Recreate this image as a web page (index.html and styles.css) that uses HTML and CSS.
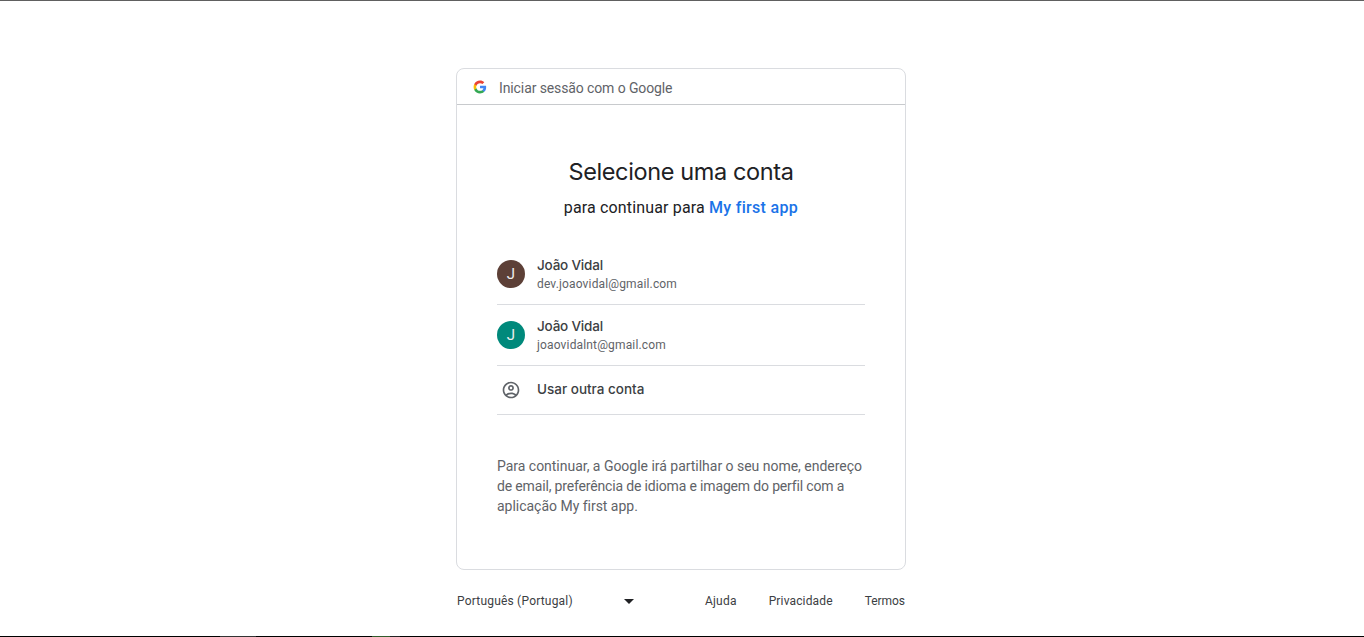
FILE: index.html
```html
<!DOCTYPE html>
<html lang="pt-PT">
<head>
<meta charset="utf-8">
<title>Iniciar sessão com o Google</title>
<link rel="stylesheet" href="styles.css">
</head>
<body>
<main class="page">
  <section class="card">
    <header class="card-header">
      <svg class="logo" viewBox="0 0 48 48" aria-hidden="true">
        <path fill="#4285F4" d="M45.12 24.5c0-1.56-.14-3.06-.4-4.5H24v8.51h11.84c-.51 2.75-2.06 5.08-4.39 6.64v5.52h7.11c4.16-3.83 6.56-9.47 6.56-16.17z"/>
        <path fill="#34A853" d="M24 46c5.94 0 10.92-1.97 14.56-5.33l-7.11-5.52c-1.97 1.32-4.49 2.1-7.45 2.1-5.73 0-10.58-3.87-12.31-9.07H4.34v5.7C7.96 41.07 15.4 46 24 46z"/>
        <path fill="#FBBC05" d="M11.69 28.18C11.25 26.86 11 25.45 11 24s.25-2.86.69-4.18v-5.7H4.34C2.85 17.09 2 20.45 2 24s.85 6.91 2.34 9.88l7.35-5.7z"/>
        <path fill="#EA4335" d="M24 10.75c3.23 0 6.13 1.11 8.41 3.29l6.31-6.31C34.91 4.18 29.93 2 24 2 15.4 2 7.96 6.93 4.34 14.12l7.35 5.7c1.73-5.2 6.58-9.07 12.31-9.07z"/>
      </svg>
      <span class="header-text">Iniciar sessão com o Google</span>
    </header>
    <div class="content">
      <h1 class="title">Selecione uma conta</h1>
      <p class="subtitle"><span class="lead">para continuar para</span> <a class="app">My first app</a></p>
      <ul class="accounts">
        <li class="account">
          <span class="avatar brown">J</span>
          <span class="who"><span class="name">João Vidal</span><span class="mail">dev.joaovidal@gmail.com</span></span>
        </li>
        <li class="account">
          <span class="avatar teal">J</span>
          <span class="who"><span class="name">João Vidal</span><span class="mail">joaovidalnt@gmail.com</span></span>
        </li>
        <li class="account other">
          <svg class="user-icon" viewBox="0 0 24 24" aria-hidden="true"><path fill="#5f6368" d="M12 2C6.48 2 2 6.48 2 12s4.48 10 10 10 10-4.48 10-10S17.52 2 12 2zM7.35 18.5C8.66 17.56 10.26 17 12 17s3.34.56 4.65 1.5C15.34 19.44 13.74 20 12 20s-3.34-.56-4.65-1.5zm10.79-1.38C16.45 15.8 14.32 15 12 15s-4.45.8-6.14 2.12C4.7 15.73 4 13.95 4 12c0-4.42 3.58-8 8-8s8 3.58 8 8c0 1.95-.7 3.73-1.86 5.12zM12 6c-1.93 0-3.5 1.57-3.5 3.5S10.07 13 12 13s3.5-1.57 3.5-3.5S13.93 6 12 6zm0 5c-.83 0-1.5-.67-1.5-1.5S11.17 8 12 8s1.5.67 1.5 1.5S12.83 11 12 11z"/></svg>
          <span class="other-name">Usar outra conta</span>
        </li>
      </ul>
      <p class="notice">Para continuar, a Google irá partilhar o seu nome, endereço<br><span class="tight">de email, preferência de idioma e imagem do perfil com a</span><br>aplicação My first app.</p>
    </div>
  </section>
  <footer class="footer">
    <div class="language"><span>Português (Portugal)</span><span class="arrow"></span></div>
    <nav class="links"><a class="help">Ajuda</a><a class="privacy">Privacidade</a><a class="terms">Termos</a></nav>
  </footer>
</main>
<div class="edge"></div>
</body>
</html>
```
FILE: styles.css
```css
* { box-sizing: border-box; }
body { margin: 0; background: #fff; font-family: Roboto, sans-serif; color: #202124; }
.page { height: 636px; border-top: 1px solid #606060; padding: 67px 0 0 456px; }
.card { width: 450px; height: 502px; border: 1px solid #dadce0; border-radius: 8px; }
.card-header { height: 36px; border-bottom: 1px solid #c8cacd; display: flex; align-items: center; padding: 2px 0 0 16px; }
.logo { width: 14px; height: 14px; margin-top: -2px; }
.header-text { margin-left: 12px; font-size: 14px; color: #5f6368; letter-spacing: -0.11px; }
.content { padding: 51px 40px 0; }
.title { margin: 0; text-align: center; font: 400 23.5px/32px Inter, sans-serif; letter-spacing: -0.38px; white-space: nowrap; }
.subtitle { margin: 8px 0 0; text-align: center; font-size: 16px; line-height: 24px; letter-spacing: 0.1px; white-space: nowrap; }
.lead { letter-spacing: 0.15px; }
.app { color: #1a73e8; font-weight: 500; letter-spacing: 0.32px; }
.accounts { list-style: none; margin: 24px 0 0; padding: 0; }
.account { height: 61px; display: flex; align-items: center; border-bottom: 1px solid #dadce0; }
.avatar { width: 28px; height: 28px; border-radius: 50%; color: #eee; font-size: 15px; line-height: 29px; text-align: center; }
.brown { background: #5d4037; }
.teal { background: #00897b; }
.who { margin-left: 12px; display: flex; flex-direction: column; }
.name { font: 500 13.5px/18px Inter, sans-serif; color: #3c4043; letter-spacing: -0.2px; }
.mail { padding-top: 1px; margin-bottom: -1px; font-size: 12px; line-height: 18px; color: #5f6368; letter-spacing: 0.15px; }
.other { height: 49px; }
.user-icon { width: 20px; height: 20px; margin: 0 4px; }
.other-name { margin-left: 12px; padding-bottom: 2px; font: 500 13.5px/20px Inter, sans-serif; color: #3c4043; letter-spacing: 0; }
.notice { margin: 41px 0 0; font-size: 14px; line-height: 20px; color: #5f6368; white-space: nowrap; letter-spacing: -0.02px; }
.tight { letter-spacing: -0.16px; }
.footer { width: 450px; height: 62px; padding: 0 1px; display: flex; align-items: center; justify-content: space-between; font-size: 12px; color: #3c4043; }
.language { width: 177px; display: flex; align-items: center; justify-content: space-between; letter-spacing: 0.2px; }
.arrow { border: 5px solid transparent; border-top-color: #202124; border-bottom: 0; }
.links { display: flex; gap: 32px; letter-spacing: 0.1px; }
.help { letter-spacing: 0.2px; }
.privacy { letter-spacing: 0.15px; }
.terms { letter-spacing: -0.05px; }
.edge { height: 1px; background: linear-gradient(to right, #000 220px, #333 220px 256px, #000 256px 372px, #315b2c 372px 390px, #222 390px 400px, #000 400px); }
```
